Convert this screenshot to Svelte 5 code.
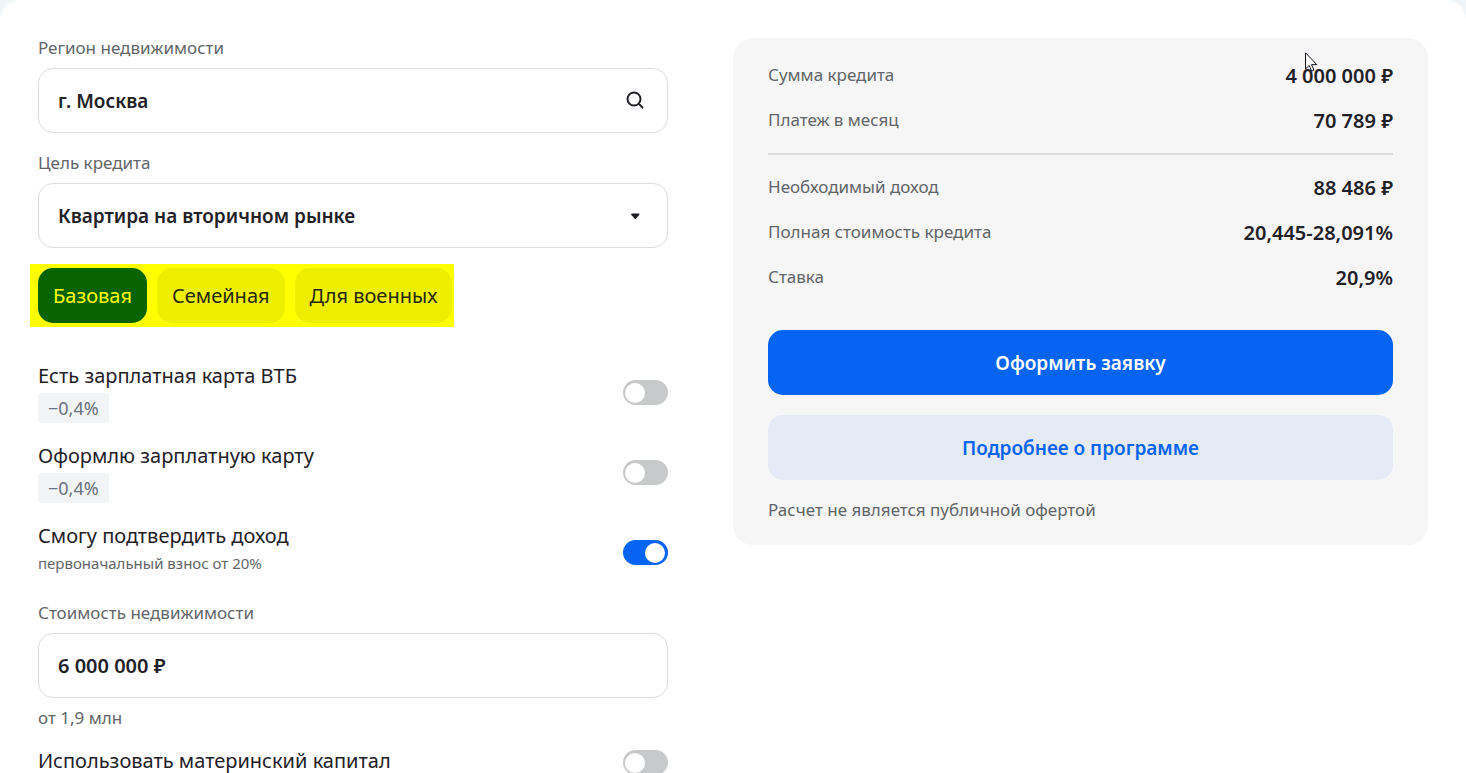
<script lang="ts">
  interface Discount {
    id: string;
    title: string;
    badge?: string;
    note?: string;
    checked: boolean;
  }

  const programs = ["Базовая", "Семейная", "Для военных"];

  let region = $state("г. Москва");
  let purpose = $state("Квартира на вторичном рынке");
  let program = $state("Базовая");
  let price = $state("6 000 000 ₽");
  let maternity = $state(false);

  let discounts = $state<Discount[]>([
    { id: "salary-card", title: "Есть зарплатная карта ВТБ", badge: "−0,4%", checked: false },
    { id: "new-card", title: "Оформлю зарплатную карту", badge: "−0,4%", checked: false },
    {
      id: "income",
      title: "Смогу подтвердить доход",
      note: "первоначальный взнос от 20%",
      checked: true,
    },
  ]);

  const loan = [
    { name: "Сумма кредита", value: "4 000 000 ₽", pointer: true },
    { name: "Платеж в месяц", value: "70 789 ₽" },
  ];

  const terms = [
    { name: "Необходимый доход", value: "88 486 ₽" },
    { name: "Полная стоимость кредита", value: "20,445-28,091%" },
    { name: "Ставка", value: "20,9%" },
  ];
</script>

<main class="calculator">
  <form class="params" onsubmit={(e) => e.preventDefault()}>
    <div class="field">
      <label for="region">Регион недвижимости</label>
      <div class="control">
        <input id="region" type="text" bind:value={region} />
        <svg class="icon" width="24" height="24" viewBox="0 0 24 24" fill="none" aria-hidden="true">
          <circle cx="11" cy="11" r="6.5" stroke="currentColor" stroke-width="2" />
          <path d="M15.6 15.6 20 20" stroke="currentColor" stroke-width="2" />
        </svg>
      </div>
    </div>

    <div class="field">
      <label for="purpose">Цель кредита</label>
      <div class="control">
        <select id="purpose" bind:value={purpose}>
          <option>Квартира на вторичном рынке</option>
        </select>
        <svg class="icon" width="24" height="24" viewBox="0 0 24 24" aria-hidden="true">
          <path
            d="M9 10.500h6.600c.9 0 1.200.9.600 1.600l-3.100 3.400a1 1 0 0 1-1.600 0L8.400 12.100C7.800 11.400 8.100 10.500 9 10.500Z"
            fill="currentColor"
          />
        </svg>
      </div>
    </div>

    <div class="programs">
      {#each programs as name}
        <button
          type="button"
          class="chip"
          class:active={program === name}
          aria-pressed={program === name}
          onclick={() => (program = name)}
        >
          {name}
        </button>
      {/each}
    </div>

    <div class="discounts">
      {#each discounts as item (item.id)}
        <div class="option">
          <label for={item.id}>
            <span class="title">{item.title}</span>
            {#if item.badge}
              <span class="badge">{item.badge}</span>
            {:else if item.note}
              <span class="note">{item.note}</span>
            {/if}
          </label>
          <input id={item.id} class="switch" type="checkbox" role="switch" bind:checked={item.checked} />
        </div>
      {/each}
    </div>

    <div class="field">
      <label for="price">Стоимость недвижимости</label>
      <div class="control">
        <input id="price" class="amount" type="text" bind:value={price} />
      </div>
      <p class="hint">от 1,9 млн</p>
    </div>

    <div class="option single">
      <label for="maternity"><span class="title">Использовать материнский капитал</span></label>
      <input id="maternity" class="switch" type="checkbox" role="switch" bind:checked={maternity} />
    </div>
  </form>

  <aside class="summary">
    <dl>
      {#each loan as row}
        <div class="row">
          <dt>{row.name}</dt>
          <dd>
            {row.value}
            {#if row.pointer}
              <svg class="pointer" width="13" height="21" viewBox="0 0 13 21" aria-hidden="true">
                <path
                  d="M.5.8v16.200l3.700-3.600 2.500 5.800 2.300-1-2.500-5.600h5.300Z"
                  fill="#fff"
                  stroke="#14141e"
                />
              </svg>
            {/if}
          </dd>
        </div>
      {/each}
    </dl>
    <hr />
    <dl>
      {#each terms as row}
        <div class="row">
          <dt>{row.name}</dt>
          <dd>{row.value}</dd>
        </div>
      {/each}
    </dl>

    <div class="actions">
      <button type="button" class="primary">Оформить заявку</button>
      <a href="#program" class="secondary">Подробнее о программе</a>
    </div>
    <p class="disclaimer">Расчет не является публичной офертой</p>
  </aside>
</main>

<style>
  :global(body) {
    background: #f0f5fa;
  }

  .calculator {
    box-sizing: border-box;
    min-height: 100vh;
    display: grid;
    grid-template-columns: 630fr 695fr;
    align-items: start;
    gap: 65px;
    padding: 36px 38px 0;
    background: #fff;
    border-radius: 20px 20px 0 0;
    color: #1f2127;
    font-family: "Noto Sans", "Open Sans", sans-serif;
    font-size: 20px;
    line-height: 28px;
  }

  input,
  select,
  button {
    font: inherit;
    color: inherit;
  }

  .field {
    margin-bottom: 18px;
  }
  .field label {
    display: block;
    margin-bottom: 8px;
    color: #626569;
    font-size: 17px;
    line-height: 24px;
  }

  .control {
    display: flex;
    position: relative;
  }
  .control input,
  .control select {
    box-sizing: border-box;
    width: 100%;
    height: 65px;
    padding: 0 60px 0 19px;
    border: 1px solid #dcdddd;
    border-radius: 15px;
    background: #fff;
    font-size: 19px;
    font-weight: 600;
    appearance: none;
    outline: none;
  }
  .control .amount {
    font-size: 20px;
  }
  .control .icon {
    position: absolute;
    top: 20px;
    right: 21px;
    pointer-events: none;
  }

  .programs {
    display: flex;
    gap: 10px;
    width: max-content;
    margin: -2px 0 35px -8px;
    padding: 4px 2px 4px 8px;
    background: #ff0;
  }
  .chip {
    height: 55px;
    padding: 0 15px;
    border: none;
    border-radius: 15px;
    background: #eeee00;
    color: #282808;
    cursor: pointer;
  }
  .chip.active {
    background: #066300;
    color: #ff0;
  }

  .discounts {
    display: grid;
    gap: 19px;
    margin-bottom: 18px;
  }
  .option {
    display: flex;
    align-items: center;
    justify-content: space-between;
    min-height: 61px;
  }
  .option label {
    display: flex;
    flex-direction: column;
    align-items: flex-start;
    align-self: flex-start;
    gap: 3px;
  }
  .option.single {
    min-height: 31px;
  }
  .badge {
    padding: 0 10px;
    border-radius: 4px;
    background: #f3f4f6;
    color: #6a7181;
    font-size: 18px;
    line-height: 30px;
  }
  .note {
    color: #626569;
    font-size: 15px;
    line-height: 20px;
  }

  .switch {
    flex: none;
    display: block;
    width: 45px;
    height: 25px;
    margin: 0;
    padding: 3px 3px 2px 2px;
    box-sizing: border-box;
    border-radius: 13px;
    background: #c8c9cb;
    appearance: none;
    cursor: pointer;
  }
  .switch::before {
    content: "";
    display: block;
    width: 20px;
    height: 20px;
    border-radius: 50%;
    background: #fff;
  }
  .switch:checked {
    background: #0664f2;
  }
  .switch:checked::before {
    margin-left: auto;
  }

  .hint {
    margin: 8px 0 0;
    color: #626569;
    font-size: 17px;
    line-height: 23px;
  }

  .summary {
    margin-top: 2px;
    padding: 24px 35px 23px;
    border-radius: 20px;
    background: #f6f6f6;
  }
  .summary dl {
    display: grid;
    gap: 17px;
    margin: 0;
  }
  .row {
    display: flex;
    justify-content: space-between;
  }
  .row dt {
    color: #626569;
    font-size: 17px;
    line-height: 26px;
  }
  .row dd {
    position: relative;
    margin: 0;
    font-weight: 600;
  }
  .pointer {
    position: absolute;
    top: -10px;
    right: 75px;
  }
  .summary hr {
    height: 2px;
    margin: 18px 0 19px;
    border: none;
    background: #dcdcdc;
  }

  .actions {
    display: grid;
    gap: 20px;
    margin-top: 38px;
  }
  .actions .primary,
  .actions .secondary {
    display: flex;
    align-items: center;
    justify-content: center;
    height: 65px;
    padding: 0 15px;
    border: none;
    border-radius: 15px;
    font-size: 19px;
    font-weight: 600;
    text-decoration: none;
    cursor: pointer;
  }
  .actions .primary {
    background: #0664f2;
    color: #fff;
  }
  .actions .secondary {
    background: #e4ebf6;
    color: #0664f2;
  }
  .disclaimer {
    margin: 18px 0 0;
    color: #626569;
    font-size: 17px;
    line-height: 24px;
  }
</style>
